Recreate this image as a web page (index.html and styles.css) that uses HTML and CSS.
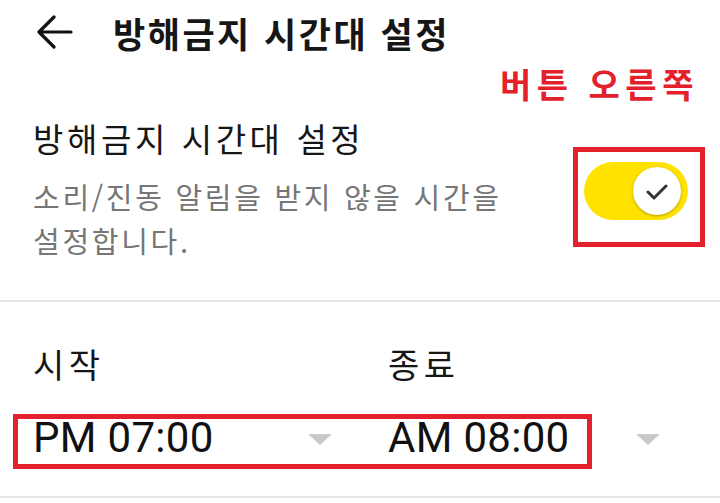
FILE: index.html
```html
<!DOCTYPE html>
<html lang="ko">
<head>
<meta charset="utf-8">
<link rel="stylesheet" href="styles.css">
</head>
<body>
<div class="screen">
  <header class="appbar">
    <svg class="back" width="36" height="34" viewBox="0 0 36 34"><path d="M34 17H3M17 2L2 17l15 15" fill="none" stroke="#111" stroke-width="3.2" stroke-linecap="round" stroke-linejoin="round"/></svg>
    <h1 class="appbar-title">방해금지 시간대 설정</h1>
  </header>

  <section class="setting">
    <div class="setting-text">
      <div class="setting-title">방해금지 시간대 설정</div>
      <div class="setting-desc">소리/진동 알림을 받지 않을 시간을<br>설정합니다.</div>
    </div>
    <div class="switch">
      <div class="thumb">
        <svg width="22" height="16" viewBox="0 0 22 16"><path d="M2 8l6 6L20 2" fill="none" stroke="#333" stroke-width="3" stroke-linecap="round" stroke-linejoin="round"/></svg>
      </div>
    </div>
    <div class="mark mark-switch"></div>
    <div class="note">버튼 오른쪽</div>
  </section>

  <section class="times">
    <div class="time-col col-start">
      <div class="time-label">시작</div>
      <div class="time-value"><span>PM 07:00</span><i class="caret"></i></div>
    </div>
    <div class="time-col col-end">
      <div class="time-label">종료</div>
      <div class="time-value"><span>AM 08:00</span><i class="caret"></i></div>
    </div>
    <div class="mark mark-times"></div>
  </section>
</div>
</body>
</html>
```

FILE: styles.css
```css
* { box-sizing: border-box; }
html, body { margin: 0; background: #fff; }
body {
  font-family: Roboto, "Noto Sans CJK KR", sans-serif;
  color: #1a1a1a;
  width: 720px;
  height: 503px;
  overflow: hidden;
}
.screen { position: relative; }

.appbar {
  height: 64px;
  display: flex;
  align-items: center;
  padding-left: 37px;
  gap: 40px;
}
.back { display: block; }
.appbar-title {
  margin: 0;
  font-size: 35px;
  font-weight: 700;
  font-family: "Noto Sans CJK KR", sans-serif;
  letter-spacing: 2.5px;
  color: #161616;
}

.setting {
  position: relative;
  display: flex;
  align-items: center;
  justify-content: space-between;
  padding: 52px 32px 38px 33px;
  border-bottom: 2px solid #e4e4e4;
}
.setting-title {
  font-family: "Noto Sans CJK KR", sans-serif;
  font-size: 33px;
  line-height: 44px;
  letter-spacing: 3.6px;
  color: #161616;
}
.setting-desc {
  margin-top: 14px;
  font-family: "Noto Sans CJK KR", sans-serif;
  font-size: 29px;
  line-height: 44px;
  letter-spacing: 2.7px;
  color: #767676;
}
.switch {
  width: 104px;
  height: 58px;
  border-radius: 29px;
  background: #ffe200;
  display: flex;
  align-items: center;
  justify-content: flex-end;
  padding-right: 7px;
  margin-top: 4px;
}
.thumb {
  width: 48px;
  height: 48px;
  border-radius: 50%;
  background: #fff;
  box-shadow: 0 1px 3px rgba(0,0,0,0.3);
  display: flex;
  align-items: center;
  justify-content: center;
}
.thumb svg { display: block; margin-top: 1px; }

.times {
  position: relative;
  display: flex;
  gap: 56px;
  padding: 40px 0 34px 33px;
  border-bottom: 2px solid #e4e4e4;
}
.time-col { display: flex; flex-direction: column; }
.col-start { width: 299px; }
.col-end { width: 272px; }
.time-label {
  font-family: "Noto Sans CJK KR", sans-serif;
  font-size: 34px;
  line-height: 44px;
  letter-spacing: 4.5px;
  color: #161616;
}
.time-value {
  margin-top: 28px;
  display: flex;
  align-items: center;
  justify-content: space-between;
  font-size: 42px;
  line-height: 48px;
  letter-spacing: 0.3px;
  color: #111;
}
.caret {
  width: 0;
  height: 0;
  border-left: 12px solid transparent;
  border-right: 12px solid transparent;
  border-top: 11px solid #c9c9c9;
  margin-top: 2px;
}

/* red annotation overlays */
.mark {
  position: absolute;
  border: 5px solid #e3202b;
  pointer-events: none;
}
.mark-switch { left: 573px; top: 83px; width: 132px; height: 100px; }
.mark-times { left: 13px; bottom: 27px; width: 579px; height: 55px; }
.note {
  position: absolute;
  left: 500px;
  top: -2px;
  font-family: "Noto Sans CJK KR", sans-serif;
  font-size: 34px;
  font-weight: 700;
  line-height: 44px;
  color: #e3202b;
  letter-spacing: 5.5px;
}
```
